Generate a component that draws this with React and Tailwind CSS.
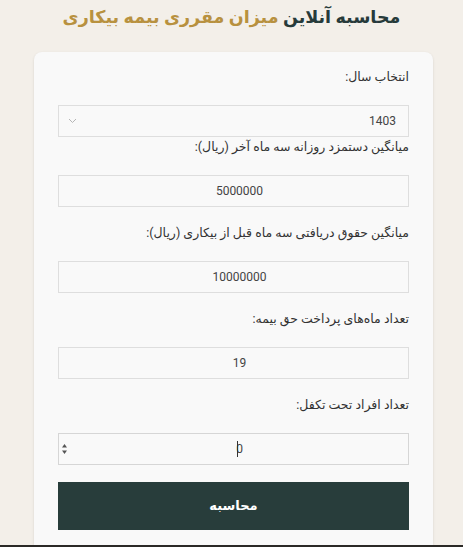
import React, { useState } from 'react';

const fields = [
  { label: 'میانگین دستمزد روزانه سه ماه آخر (ریال):', value: '5000000' },
  { label: 'میانگین حقوق دریافتی سه ماه قبل از بیکاری (ریال):', value: '10000000' },
  { label: 'تعداد ماه‌های پرداخت حق بیمه:', value: '19' },
];

const App = () => {
  const [year, setYear] = useState('1403');
  const [values, setValues] = useState(fields.map((f) => f.value));
  const [family, setFamily] = useState('0');

  return (
    <div
      dir="rtl"
      className="min-h-[547px] bg-[#f3efe9] flex flex-col items-center"
      style={{ fontFamily: 'Roboto, "DejaVu Sans", sans-serif' }}
    >
      {/* Title */}
      <h1 className="mt-[3px] text-[17.5px] leading-[28px] font-bold text-[#263a3a]">
        محاسبه آنلاین <span className="text-[#b8913f]">میزان مقرری بیمه بیکاری</span>
      </h1>

      {/* Form card */}
      <div className="mt-[21px] mr-[-4px] w-[399px] bg-[#f9f9f9] rounded-t-[8px] shadow-sm px-[24px] pt-[15px] pb-[15px]">
        <label className="block text-[12.5px] leading-[20px] text-[#333]">انتخاب سال:</label>
        <div className="relative mt-[18px]">
          <select
            value={year}
            onChange={(e) => setYear(e.target.value)}
            className="w-full h-[32px] appearance-none bg-[#f9f9f9] border border-[#dedede] pl-[14px] pr-[12px] text-[12px] text-[#444] outline-none"
          >
            <option>1403</option>
            <option>1402</option>
            <option>1401</option>
          </select>
          <svg className="absolute left-[10px] top-[13px] pointer-events-none" width="9" height="6" viewBox="0 0 9 6">
            <path d="M1 1l3.5 3.5L8 1" fill="none" stroke="#b5b5b5" strokeWidth="1" />
          </svg>
        </div>

        {fields.map((f, i) => (
          <div key={i} className={i === 0 ? '' : 'mt-[16px]'}>
            <label className="block text-[12.5px] leading-[20px] text-[#333]">{f.label}</label>
            <input
              type="text"
              value={values[i]}
              onChange={(e) => {
                const next = [...values];
                next[i] = e.target.value;
                setValues(next);
              }}
              className="mt-[18px] w-full h-[32px] bg-[#f9f9f9] border border-[#dedede] pl-[12px] text-center text-[12px] text-[#444] outline-none"
            />
          </div>
        ))}

        <div className="mt-[16px]">
          <label className="block text-[12.5px] leading-[20px] text-[#333]">تعداد افراد تحت تکفل:</label>
          <div className="relative mt-[18px]">
            <input
              type="text"
              value={family}
              onChange={(e) => setFamily(e.target.value)}
              className="w-full h-[32px] bg-[#f9f9f9] border border-[#d6d6d6] pl-[12px] text-center text-[12px] text-[#444] outline-none"
            />
            {/* caret + spinner */}
            <span className="absolute left-[179px] top-[8px] w-px h-[16px] bg-[#333]" />
            <svg className="absolute left-[3px] top-[10px]" width="7" height="12" viewBox="0 0 7 12">
              <path d="M3.5 1L6 4.5H1z" fill="#555" />
              <path d="M3.5 11L6 7.5H1z" fill="#555" />
            </svg>
          </div>
        </div>

        <button className="mt-[17px] w-full h-[48px] bg-[#283d3b] text-white text-[13px] font-bold">
          محاسبه
        </button>
      </div>

      <div className="w-full h-[20px] bg-[#2b2926]" />
    </div>
  );
};

export default App;
